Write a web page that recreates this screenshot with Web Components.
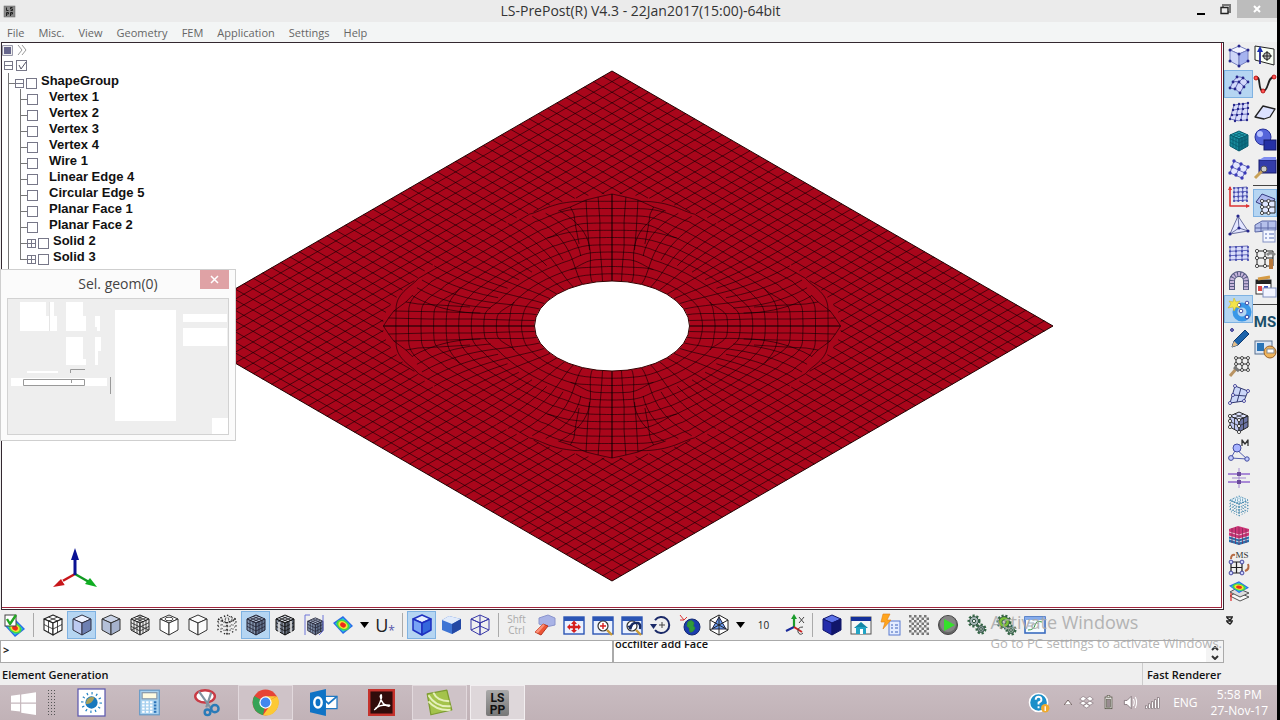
<!DOCTYPE html>
<html lang="en">
<head>
<meta charset="utf-8">
<title>LS-PrePost(R) V4.3</title>
<style>
html,body{margin:0;height:100%;background:#000}
body{font-family:"Open Sans","Noto Sans",sans-serif;font-size:12px;color:#111}
</style>
</head>
<body>
<ls-app></ls-app>
<script>
/* ---------- icon drawing helpers ---------- */
const NAVY='#26268c';
const poly=(pts,f='none',s='none',w=1)=>`<polygon points="${pts}" fill="${f}" stroke="${s}" stroke-width="${w}" stroke-linejoin="round"/>`;
const path=(d,s='#222',f='none',w=1)=>`<path d="${d}" stroke="${s}" fill="${f}" stroke-width="${w}" stroke-linejoin="round"/>`;
const rect=(x,y,w,h,f='none',s='none',sw=1)=>`<rect x="${x}" y="${y}" width="${w}" height="${h}" fill="${f}" stroke="${s}" stroke-width="${sw}"/>`;
const circ=(x,y,r,f='none',s='none',w=1)=>`<circle cx="${x}" cy="${y}" r="${r}" fill="${f}" stroke="${s}" stroke-width="${w}"/>`;
const dots=(list,r=1.3,f=NAVY,s='none')=>list.map(p=>circ(p[0],p[1],r,f,s,.8)).join('');
const mix=(a,b,t)=>[a[0]+(b[0]-a[0])*t,a[1]+(b[1]-a[1])*t];
function faceGrid(a,b,c,d,n,s,w=.8){
  let out='';
  for(let i=1;i<n;i++){
    const t=i/n,p=mix(a,b,t),q=mix(d,c,t),u=mix(a,d,t),v=mix(b,c,t);
    out+=`M${p}L${q}M${u}L${v}`;
  }
  return path(out,s,'none',w);
}
const T=[11,1],UR=[20,5],UL=[2,5],C=[11,9],DL=[2,16],DR=[20,16],B=[11,21];
function cube(t,l,r,s='#222',n=0,w=1){
  return poly([T,UR,C,UL],t,s,w)+poly([UL,C,B,DL],l,s,w)+poly([C,UR,DR,B],r,s,w)+
    (n?faceGrid(T,UR,C,UL,n,s)+faceGrid(UL,C,B,DL,n,s)+faceGrid(C,UR,DR,B,n,s):'');
}
const contour=(y=0)=>poly(`1,${9+y} 11,${2+y} 21,${12+y} 11,${20+y}`,'#2a6ae8')+poly(`3,${9.5+y} 11,${4+y} 19,${12+y} 11,${18+y}`,'#22cfe0')+
  `<g transform="rotate(30 11 ${11+y})"><ellipse cx="11" cy="${11+y}" rx="7" ry="5" fill="#45d545"/><ellipse cx="11" cy="${11+y}" rx="5" ry="3.6" fill="#f2e530"/><ellipse cx="11" cy="${11+y}" rx="3" ry="2.3" fill="#ee2a1a"/></g>`;
const win=rect(1,3,20,17,'#eaf1ff','#2b55b5',1.4)+rect(1,3,20,4,'#2b55b5');
const lens=circ(11,12,5,'#fff','#333',1.2)+path('M15 16L20 21','#c99a35','none',2.4);
const gear=(x,y,r,f)=>`<circle cx="${x}" cy="${y}" r="${r}" fill="none" stroke="#364" stroke-width="3" stroke-dasharray="2 1.6"/>`+circ(x,y,r-.6,f,'#354')+circ(x,y,r/3,'#eee','#354');
const mesh3=(x0,y0,x1,y1,c='#4449ac')=>{let d='',p=[];for(let i=0;i<4;i++){const x=x0+(x1-x0)*i/3,y=y0+(y1-y0)*i/3;d+=`M${x0} ${y}L${x1} ${y-1}M${x} ${y0}L${x} ${y1}`;for(let j=0;j<4;j++)p.push([x,y0+(y1-y0)*j/3]);}return rect(x0,y0,x1-x0,y1-y0,'#d9ddfa')+path(d,c,'none',.8)+dots(p,1.1,c);};
const brackets=path('M7 1H2V21M20 1V17L16 21','#6d74d8','none',1);

const ICONS={
check:contour(3)+rect(1,1,11,11,'#fff','#444')+path('M3 5L6 10L12 1','#22a522','none',2.4),
gridCube:cube('#fff','#fff','#fff','#222',2,1.1),
shade:cube('#eef2ff','#bccaf2','#6e80b2','#334'),
flat:cube('#c9d3e6','#b4c0d8','#a5b2cc','#333'),
gridWire:cube('#fff','#eee','#eee','#222',3)+path('M11 1V21M2 16L11 12L20 16','#444'),
feature:cube('#fff','#fff','#fff','#333')+`<ellipse cx="11" cy="5" rx="4" ry="1.8" fill="none" stroke="#444"/>`,
outline:cube('#fafafa','#fafafa','#fafafa','#333'),
points:`<g stroke-dasharray="1.4 2.6">${cube('none','none','none','#222',3,1.3)}</g>`,
gridShade:cube('#aebdd2','#8495ae','#64748f','#223',3),
gridShade2:cube('#dce0e8','#8c95a6','#626a78','#111',3)+path('M5 8V19M17 7V18','#fff','none',1.4),
gridSect:`<g transform="translate(3 3) scale(.85)">${cube('#b5c2d8','#8495b0','#64748f','#223',3)}</g>`+brackets,
contour:contour(),
blue:cube('#e4eeff','#79a4f6','#3467dc','#1e2fc0',0,1.5),
blueSolid:poly('2,6 9,2 21,5 21,15 12,20 2,16','#3e74d4')+poly('2,6 9,2 21,5 12,10','#e1ebfb')+poly('12,10 21,5 21,15 12,20','#2448a4'),
blueWire:cube('none','none','none','#3a3aa8',0)+path('M2 16L11 12L20 16M11 1V12','#3a3aa8'),
eraser:poly('5,4 14,1 21,4 21,11 12,13 5,10','#a9b3e6','#8a94cc')+poly('1,18 9,10 14,12 7,21','#ee5535','#b83520')+poly('1,18 9,10 11,11 4,19','#f9917a'),
fit:win+path('M11 8V18M6 13H16','#d51f1f','none',2.4)+poly('11,6.5 14,10 8,10','#d51f1f')+poly('11,19 14,16 8,16','#d51f1f')+poly('4,13 7,10 7,16','#d51f1f')+poly('18,13 15,10 15,16','#d51f1f'),
zoomIn:win+lens+path('M8 12H14M11 9V15','#d51f1f','none',1.4),
zoomOut:win+lens+path('M9 15Q10 8 17 9Q20 10 19 15','#182a60','none',2.4)+poly('6,12 12,11 10,16','#182a60'),
rotate:`<g transform="translate(0 1)">${path('M5 15A8 8 0 1 0 5 5','#1b2a68','none',2)}${poly('0,9 7,9 3.5,14','#1b2a68')}${path('M9 10H15M12 7V13','#444')}</g>`,
globe:circ(13,13,8,'#1b3cae','#142a70')+path('M9 8Q13 5 15 9Q13 12 16 14Q14 19 11 18Q11 13 8 12Z','#2f8b35','#2f9b3b')+path('M1 1L5 6M5 6H1M5 6L8 3','#d33'),
pyramid:poly('11,1 20,6 20,16 11,21 2,16 2,6','#fff','#222')+poly('11,3 18,15 4,15','#6a9cf0','#224')+path('M11 1V21M2 6L11 11L20 6M2 16L11 11L20 16','#222'),
axes:path('M11 13V4','#1c9b2c','none',2.2)+poly('11,0 14,5 8,5','#1c9b2c')+path('M11 13L3 17','#1a2a9a','none',2)+path('M11 13L19 18','#c22','none',2)+path('M16 3L21 9M21 3L16 9','#444')+path('M20 13Q14 13 15 18Q17 22 20 19','#444'),
navyCube:cube('#5d73e8','#242cab','#11166b','#11166b'),
home:rect(1,3,20,17,'#f7f7f7','#555')+rect(1,3,20,4,'#15309a')+poly('11,8 18,14 4,14','#1587a5')+rect(6,13,10,7,'#22a4c5')+rect(10,15,3,5,'#fff'),
bolt:rect(10,7,11,14,'#e3ecff','#5a7bd0')+path('M12 11H14M16 11H19M12 14H14M16 14H19M12 18H14M16 18H19','#3d60b8')+poly('4,0 11,0 8,6 12,6 4,15 6,8 2,8','#ffa51e','#e37e10',.6),
checker:Array.from({length:64},(_,i)=>((i+(i>>3))%2?'':rect(1+(i%8)*2.5,1+(i>>3)*2.5,2.5,2.5,'#777'))).join(''),
play:circ(11,11,9.5,'#666','#444')+circ(11,10,8,'#858585')+poly('7,5 18,11 7,17','#35e02b'),
gears:gear(8,7,5,'#a8b8b8')+gear(15,15,4,'#8fa0a0'),
gearsGreen:gear(9,8,6,'#79c037')+gear(16,16,4,'#93b59d'),
chart:rect(1,3,20,16,'#f5fbff','#3a6cc0',1.6)+rect(1,3,20,3,'#86acec')+path('M4 16Q10 16 11 11T18 8','#399a45')+path('M4 9H10M4 12H8','#9ab'),
/* side tool column */
solid:cube('#f2f4ff','#cdd5f8','#a5b3ef','#7780c0')+dots([T,UR,C,UL,DL,DR,B],1.5),
surf:path('M2 15Q5 7 9 4Q15 3 20 9Q15 13 12 20Q8 15 2 15Z','#6a70b8','#d2d8fb')+path('M5 9Q11 7 16 14M15 5Q9 9 7 16','#5a60b0')+dots([[2,15],[5,9],[9,4],[15,5],[20,9],[16,14],[12,20],[7,16],[11,9]],1.4),
meshSurf:path('M6 4L3 18L8 20L20 19L20 3Z','none','#d9ddfa')+path('M6 4L2 18M11 3L7 20M15 3L13 19M20 2L19 19M6 4L20 2M5 9L20 7M4 14L20 13M2 18Q10 21 19 19','#5358b0','none',.8)+dots([[6,4],[11,3],[15,3],[20,2],[5,9],[10,8],[15,8],[20,7],[4,14],[9,14],[14,13],[20,13],[2,18],[7,20],[13,19],[19,19]],1.2),
teal:cube('#27a9b8','#178a9b','#0d7285','#075c6e',3),
nodesQ:poly('6,3 20,9 14,20 2,15','#e3e6ff','#6a70b8')+path('M4 9L17 15M13 6L8 17','#6a70b8')+dots([[6,3],[20,9],[14,20],[2,15],[4,9],[17,15],[13,6],[8,17],[11,11]],1.7,'#3a3ab8'),
redAxis:mesh3(6,2,19,15)+path('M2 1V20H21','#d33','none',1.6)+poly('0,4 2,0 4,4','#d33')+poly('18,18 22,20 18,22','#d33'),
tetra:poly('10,2 20,17 2,20','#e3e6ff','#6a70a0')+path('M10 2L11 14L2 20M11 14L20 17','#6a70a0')+dots([[10,2],[20,17],[2,20],[11,14]],1.6),
quads:mesh3(2,5,20,18),
arch:path('M4 20V11A7 7 0 0 1 18 11V20','#555a80','none',6)+path('M4 20V11A7 7 0 0 1 18 11V20','#c6b5dc','none',4)+`<path d="M4 20V11A7 7 0 0 1 18 11V20" fill="none" stroke="#555a80" stroke-width="5" stroke-dasharray="1 2"/>`,
star:circ(14,14,7,'none','#3997e8',5)+dots([[11,7],[19,5],[13,13],[19,19]],1.8,'#fff',NAVY)+poly('6,0 8,4 12,3 9,7 12,10 8,9 6,13 5,9 0,10 3,6 1,3 5,4','#f4e449','#cdb92b',.6),
pencil:poly('4,20 6,14 17,3 21,7 10,18','#1b62aa','#0f3b71')+poly('4,20 6,14 10,18','#e3bc87')+circ(4,3,1.4,'#88b',NAVY),
wrenchMesh:path('M8 3H20V15H8ZM14 3V15M8 9H20','#222')+dots([[8,3],[14,3],[20,3],[8,9],[14,9],[20,9],[14,15],[20,15]],1.5,'#fff','#222')+path('M2 21L8 14','#b99362','none',3)+path('M6 12L11 16','#777','none',3),
sheet:poly('7,3 20,8 16,18 2,20','#cbd6f8','#333a70')+path('M5 12L18 13M13 5L9 19','#333a70')+dots([[7,3],[20,8],[16,18],[2,20],[5,12]],1.5,'#fff',NAVY),
boxMesh:cube('#dde2ff','#bfc7f2','#6c74a5','#222',2)+dots([UL,C,DL,B,[2,10],[11,15]],1.6,'#fff','#222'),
massM:path('M8 10L3 19L19 20Z','#5560b0')+circ(9,9,4,'#a7b3ff','#414a9f')+circ(3,19,2.4,'#c4ccff','#414a9f')+circ(19,20,2.2,'#c4ccff','#414a9f')+path('M14 7V1L17 5L20 1V7','#333','none',1.3),
beams:path('M0 7H22M0 15H22','#9268ce','none',1.6)+path('M4 11H18M11 1V21','#a389d0')+rect(9,5,4,4,'#6c4c9c')+rect(9,13,4,4,'#6c4c9c'),
cloud:`<g stroke-dasharray="1 2">${cube('#edf5fa','none','none','#3f85ac',4,1)}${path('M3 6Q8 9 20 7M2 10Q12 15 20 10M2 14Q12 18 20 15','#3f85ac')}</g>`,
stack:poly('1,5 10,2 21,5 21,12 11,15 1,12','#cc3577')+poly('1,12 11,15 21,12 21,18 11,21 1,18','#2672af')+path('M1 8L11 11L21 8M1 12L11 15L21 12M1 15L11 18L21 15','#fff','none',.7)+path('M4 4V19M7.5 3V20M11 3V21M14.5 4V20M18 5V19','#822553','none',.7),
msConv:path('M3 10H14V21H3ZM8.5 10V21M3 15.5H14','#222','none',1.2)+dots([[3,10],[14,10],[3,21],[14,21]],1.9,'#cfd6ff',NAVY)+path('M3 7Q3 2 7 3M20 12Q22 17 17 19','#b66b44','none',2),
layers:poly('2,16 9,12 21,17 12,21','#f8f8f8','#555')+poly('2,12 9,8 21,13 12,17','#ddd','#555')+`<g transform="scale(1 .65)">${contour()}</g>`+path('M3 13V21','#d22','none',1.2),
/* second side column */
plane:poly('1,1 20,4 20,20 1,15','#f9fff4','#222')+path('M6 19V4',NAVY,'none',1.8)+poly('6,1 9,7 3,7','#1b2db0')+circ(13,11,3.5,'#bbb','#222')+path('M13 6V16M8 11H18','#222'),
curve:path('M1 5C8 1 3 18 9 18C15 18 13 4 20 4','#222','none',1.8)+dots([[2,5],[9,18],[20,4]],2,'#f55','#a00'),
surface:poly('1,16 9,5 21,8 16,16 10,18','#dce2ff','#222',1.3),
sphereBox:circ(9,8,8,'#5565da','#252f9a')+circ(6,5,3,'#b7c2ff')+rect(10,11,12,10,'#2430a4','#141a6a'),
boxTool:rect(5,3,17,13,'#333caa','#171b6c')+poly('5,3 10,0 22,0 22,3','#7f8df0')+path('M1 21L9 13','#c9a258','none',3)+circ(10,12,3,'#ccc','#555'),
surfMesh:poly('2,10 8,2 21,7 15,16','#aeb9ef','#333a80')+path('M8 9H21V21H8ZM14.5 9V21M8 15H21','#222','#dfe7ff')+dots([[8,9],[14.5,9],[8,15],[14.5,15],[8,21],[14.5,21]],1.6,'#fff','#222'),
blockList:poly('1,5 8,1 22,1 22,10 1,12','#b5c0eb','#5b67a4')+path('M1 8H22M7 3V12M14 2V11','#5b67a4')+rect(9,10,12,12,'#f3f6ff','#8391c3')+path('M11 14H13M15 14H20M11 18H13M15 18H20','#556ab5'),
meshTool:path('M3 3H19V18H3ZM11 3V18M3 10H19','#222')+dots([[3,3],[11,3],[3,10],[11,10],[3,18],[11,18]],1.6,'#fff','#222')+path('M17 11V21','#b7783c','none',4)+path('M13 7Q17 3 21 7','#888','none',3),
keyCard:rect(2,4,15,14,'#fff','#333')+rect(2,4,15,4,'#222')+path('M4 3L16 1','#d59a43','none',3)+rect(4,10,4,5,'#dd4545')+rect(10,10,4,5,'#3c54bb')+rect(9,12,13,9,'#f2f4ff','#8090c0'),
monitor:rect(1,2,17,13,'#dbe6f5','#59708f')+rect(3,4,7,8,'#2974b7')+circ(16,13,6,'#f0b45a','#99642c')+rect(13,10,7,4,'#fff','#888'),
/* task bar */
start:poly('0,5 8,4 8,11 0,11','#fff')+poly('9,4 22,2 22,11 9,11','#fff')+poly('0,12 8,12 8,19 0,18','#fff')+poly('9,12 22,12 22,22 9,20','#fff'),
sun:rect(0,0,22,22,'#fff','#5b58ae')+circ(11,11,5,'#1878bd')+path('M6.5 12Q11 13 13.5 7A5 5 0 0 0 6.5 12','none','#a8a05a')+`<circle cx="11" cy="11" r="7.5" fill="none" stroke="#2382c4" stroke-width="2" stroke-dasharray="1 2.9"/>`,
calc:rect(3,1,16,20,'#a8d1ef','#689bc7')+rect(5,3,12,5,'#fffbe0','#89a')+Array.from({length:16},(_,i)=>rect(5+(i%4)*3.2,10+(i>>2)*2.6,2,1.6,i%4==3?'#2b73b9':'#fff')).join(''),
snip:`<ellipse cx="9" cy="6" rx="8" ry="5" fill="#fff" stroke="#c93b45" stroke-width="2"/>`+path('M4 2L14 16M14 3L10 15','#8193a0','none',1.8)+circ(17,16,3,'none','#2a7bb8',2)+circ(11,19,2.3,'none','#2a7bb8',2),
chrome:circ(11,11,10.5,'#e64436')+path('M11 11L1.9 5.8A10.5 10.5 0 0 0 9 21.3Z','none','#36a356')+path('M11 11L20 6H11L15 13L9 21.3A10.5 10.5 0 0 0 20.5 6Z','none','#fcc934')+circ(11,11,5,'#fff')+circ(11,11,4,'#4387ef'),
outlook:rect(9,6,13,10,'#fff','#1c77c3')+path('M10 7L15 12L22 6','#1c77c3','none',1.4)+poly('0,3 13,0 13,22 0,19','#0f73c5')+`<ellipse cx="6.5" cy="11" rx="3" ry="4" fill="none" stroke="#fff" stroke-width="2"/>`,
acrobat:rect(1,1,20,20,'#300c0b','#c5322c',2)+path('M5 17Q9 15 11 7Q11 3 10 6Q11 13 17 14Q19 13 15 13Q9 13 6 16','#fff','none',1.2),
camtasia:poly('1,4 17,1 21,17 4,21','#a4c34b','#7d9c30')+path('M2 5Q8 15 20 14M2 10Q9 18 20 17M6 3Q9 10 19 10','#e5f0bb','none',1.6),
help:circ(10,11,9.5,'#1b8fc9','#fff',1.6)+path('M7 8Q7 5 10 5Q13 5 13 8Q13 10 10 11V13M10 15V17','#fff','none',2)+circ(17,17,4.4,'#efaa2d')+path('M17 15V20','#fff','none',1.4),
dropbox:['6,2 11,5 6,9 1,6','16,2 21,6 16,9 11,5','6,9 11,12 6,15 1,12','16,9 21,12 16,15 11,12','11,13 16,16 11,19 6,16'].map(p=>poly(p,'#fff','#7a6a70',.9)).join(''),
battery:rect(6,3,10,17,'#fff','#554',1.2)+rect(8,6,6,12,'#998c91','#665')+rect(9,1,4,2,'#fff','#554',.8),
volume:poly('2,8 6,8 12,2 12,20 6,14 2,14','#fff','#6a5c62')+path('M15 6Q18 11 15 16M18 3Q22 11 18 19','#fff','none',1.5),
signal:[0,1,2,3,4].map(i=>rect(1+i*4.3,16-i*3,2.8,4+i*3,'#fff','#6a5c62',.8)).join(''),
app:rect(0,0,22,22,'#8a8a8a','#666')+path('M5 3V9H9M17 3H13V6H17V9H13M5 20V13H9V16H5M13 20V13H17V16H13','#222','none',2)
};

const define=(name,css,html,setup)=>{
  const t=document.createElement('template');
  t.innerHTML=`<style>${css}</style>${html}`;
  customElements.define(name,class extends HTMLElement{
    connectedCallback(){
      if(this.shadowRoot)return;
      this.attachShadow({mode:'open'}).append(t.content.cloneNode(true));
      if(setup)setup(this.shadowRoot,this);
    }
  });
};

define('ls-icon',':host{display:inline-flex;width:22px;height:22px;flex:none}svg{display:block;width:100%;height:100%;overflow:visible}',
'<svg viewBox="0 0 22 22" aria-hidden="true"></svg>',(r,h)=>{r.querySelector('svg').innerHTML=ICONS[h.getAttribute('name')]||'';});

define('ls-tool',`:host{display:flex;width:29px;height:28px;flex:none}
button{all:unset;box-sizing:border-box;width:100%;height:100%;display:flex;align-items:center;justify-content:center;border:1px solid transparent;font-size:12px;color:#222}
:host([active]) button{background:#b5d5f2;border-color:#7fb2e2}
:host([narrow]){width:15px}`,
'<button type="button"><slot></slot></button>',(r,h)=>{
  const n=h.getAttribute('icon');
  r.querySelector('button').setAttribute('aria-label',h.getAttribute('label')||n||'tool');
  if(n)r.querySelector('button').innerHTML=`<ls-icon name="${n}"></ls-icon>`;
});

define('ls-titlebar',`:host{display:grid;grid-template-columns:1fr auto 1fr;align-items:center;height:22px;background:#ebebeb;padding-left:4px}
h1{margin:0;text-align:center;font-size:14px;line-height:22px;font-weight:400;color:#333}
ls-icon{width:11px;height:13px}
nav{display:flex;align-items:flex-start;height:22px;justify-self:end}
button{all:unset;width:24px;height:18px;display:flex;align-items:center;justify-content:center}
button:last-child{width:40px;background:#bcbcbc}`,
`<ls-icon name="app"></ls-icon><h1><slot></slot></h1><nav>
<button aria-label="Minimize"><svg width="8" height="12"><path d="M0 10h8v2H0z"/></svg></button>
<button aria-label="Restore"><svg width="11" height="11" fill="none" stroke="#222"><path d="M3 3V1h7v7H8" stroke="#777" stroke-width="2"/><path d="M1 3.5h7v6H1z" fill="#ebebeb" stroke-width="1.4"/></svg></button>
<button aria-label="Close"><svg width="8" height="8" stroke="#fff" stroke-width="2"><path d="M1 1l6 6M7 1L1 7"/></svg></button></nav>`);

define('ls-menubar',`:host{display:flex;height:20px;background:#f3f5f5;padding-left:7px;gap:14px;box-sizing:border-box}
button{all:unset;font-size:11px;line-height:17px;color:#666}`,
['File','Misc.','View','Geometry','FEM','Application','Settings','Help'].map(x=>`<button type="button">${x}</button>`).join(''));

/* finite element plate with a circular hole: a square grid outside,
   rings and spokes inside, joined by four petal shaped zones */
define('ls-mesh',':host{display:block;min-width:0;min-height:0}svg{width:100%;height:100%;display:block}',
`<svg viewBox="0 0 1219 564" role="img" aria-label="Meshed plate with hole"><g transform="translate(-2 -43)">
<path d="M612 71L1053 326L612 581L171 326Z" fill="#a9061b" stroke="#200" stroke-width="1"/>
<path id="m" fill="none" stroke="#000" stroke-opacity=".7" stroke-width=".8"/>
<ellipse cx="612" cy="326" rx="77.5" ry="45" fill="#fff" stroke="#300"/></g></svg>`,r=>{
  const S=Math.SQRT2,K=Math.sqrt(3),D=Math.PI/180,N=48,E=255/S,step=2*E/N;
  const out=[];
  const add=pts=>{if(pts.length>1)out.push('M'+pts.map(p=>(612+p[0]*K).toFixed(1)+' '+(326-p[1]).toFixed(1)).join('L'));};
  const edge=a=>119+13*Math.pow(Math.abs(Math.cos(2*a)),4);
  for(let i=1;i<N;i++){
    const c=-E+i*step;
    for(const flip of [0,1]){
      let run=[];
      const flush=()=>{if(run.length>1)add([run[0],run[run.length-1]]);run=[];};
      for(let k=0;k<=400;k++){
        const s=-E+2*E*k/400,p=flip?c:s,q=flip?s:c,x=(p+q)/S,y=(p-q)/S;
        if(Math.hypot(x,y)>=edge(Math.atan2(y,x)))run.push([x,y]);else flush();
      }
      flush();
    }
  }
  const smooth=(a,b,x)=>{const t=Math.min(1,Math.max(0,(x-a)/(b-a)));return t*t*(3-2*t);};
  const mirrored=pts=>[[1,1],[-1,1],[1,-1],[-1,-1]].forEach(m=>add(pts.map(p=>[p[0]*m[0],p[1]*m[1]])));
  const both=pts=>{mirrored(pts);mirrored(pts.map(p=>[p[1],p[0]]));};
  const polar=(rr,a)=>[rr*Math.cos(a*D),rr*Math.sin(a*D)];
  const JOIN=67;
  const diag=(i,a)=>{const c=(i+6)*step,t=Math.min(1,(c-45)/59);return c*((1-t)+t/Math.cos((a-45)*D));};
  for(let i=1;i<=9;i++){
    const pts=[];
    for(let a=90-JOIN;a<=JOIN;a+=2){const rr=diag(i,a);if(rr<=edge(a*D)+1)pts.push(polar(rr,a));}
    mirrored(pts);
  }
  for(let k=1;k<=11;k++){
    const h=45+7.25*k,t=k/12,target=diag(Math.max(1,Math.round(k*.8)),JOIN),pts=[];
    for(let a=JOIN;a<=90;a+=1){
      const ra=h*((1-t)+t/Math.sin(a*D)),s=smooth(JOIN,82,a),rr=ra*s+target*(1-s);
      if(rr<=edge(a*D))pts.push(polar(rr,a));
    }
    both(pts);
  }
  for(let j=-8;j<=8;j++){
    const q=j*step,p=Math.sqrt(119*119-q*q),P0=[(p+q)/S,(p-q)/S];
    const P3=polar(45,45-j*3.8),P1=[P0[0]-26,P0[1]-26],P2=[P3[0]*1.4,P3[1]*1.4],pts=[];
    const end=j%2?.56:1;
    for(let n=0;n<=18;n++){const u=end*n/18,v=1-u;pts.push([0,1].map(k=>v*v*v*P0[k]+3*v*v*u*P1[k]+3*v*u*u*P2[k]+u*u*u*P3[k]));}
    mirrored(pts);
  }
  both([[0,45],[0,132]]);
  both([polar(45,83),[6,60],[7,80],[7,105],[8,129]]);
  both([[13,76],[14,95],[15,126]]);
  both([[19,82],[21,100],[22,112],[24,119]]);
  both([[0,132],[8,129],[15,126],[24,119],[31,115]]);
  r.querySelector('#m').setAttribute('d',out.join(''));
});

define('ls-tree-item',`:host{display:flex;height:16px;font:bold 13px/16px "Liberation Sans",Arial,sans-serif;color:#111}
i{width:7px;height:1px;background:#777;margin-top:10px;flex:none}
b{box-sizing:border-box;width:9px;height:9px;border:1px solid #778;margin-top:6px;flex:none;background:linear-gradient(#778,#778) center/7px 1px no-repeat #fff}
b.plus{background:linear-gradient(#778,#778) center/7px 1px no-repeat,linear-gradient(#778,#778) center/1px 7px no-repeat #fff}
label{display:flex}
input{appearance:none;box-sizing:border-box;width:11px;height:11px;margin:5px 0 0 0;border:1px solid #778;background:#fff;flex:none}
b+label input{margin-left:2px}
span{padding-left:11px;white-space:nowrap}
b+label span{padding-left:4px}`,
'<i></i><label><input type="checkbox"><span><slot></slot></span></label>',(r,h)=>{
  const k=h.getAttribute('kind');
  if(k){const b=document.createElement('b');if(k==='plus')b.className='plus';r.querySelector('i').after(b);}
});

define('ls-tree',`:host{display:block;justify-self:start;align-self:start}
header{display:flex;height:14px;align-items:center;gap:4px}
.root{display:flex;height:15px;align-items:center;gap:3px;padding:1px 0 0 2px}
.root b{box-sizing:border-box;width:9px;height:9px;border:1px solid #778;background:linear-gradient(#778,#778) center/7px 1px no-repeat}
.root input{appearance:none;width:11px;height:11px;box-sizing:border-box;border:1px solid #778;margin:0}
.l1{padding:0 0 24px 6px;background:linear-gradient(#777,#777) 6px 0/1px 100% no-repeat}
.l2{margin-left:12px;background:linear-gradient(#777,#777) 0 0/1px 171px no-repeat}
.check{display:grid}.check>*{grid-area:1/1}`,
`<header><svg width="11" height="11"><path d="M.5.5h10v10H.5z" fill="#eee" stroke="#99a"/><path d="M2 2h7v7H2z" fill="#66668c"/></svg><svg width="10" height="10" fill="none" stroke="#999"><path d="M1 0l4 5-4 5M5 0l4 5-4 5"/></svg></header>
<div class="root"><b></b><label class="check"><input type="checkbox" checked aria-label="All"><svg width="11" height="11" fill="none" stroke="#556"><path d="M3 5l2 4 5-7"/></svg></label></div>
<div class="l1"><ls-tree-item kind="minus">ShapeGroup</ls-tree-item><div class="l2">
${['Vertex 1','Vertex 2','Vertex 3','Vertex 4','Wire 1','Linear Edge 4','Circular Edge 5','Planar Face 1','Planar Face 2'].map(x=>`<ls-tree-item>${x}</ls-tree-item>`).join('')}
<ls-tree-item kind="plus">Solid 2</ls-tree-item><ls-tree-item kind="plus">Solid 3</ls-tree-item></div></div>`);

define('ls-viewport',`:host{display:grid;min-height:0;margin:0 0 0 1px;border:1px solid #332830;padding:0 1px 1px 0;background:#fff}
.in{display:grid;grid-template:minmax(0,1fr)/minmax(0,1fr);min-height:0;border:solid #a0243c;border-width:0 1px 1px 0}
.in>*{grid-area:1/1}
.triad{align-self:end;justify-self:start;margin:0 0 17px 47px}`,
`<div class="in"><ls-mesh></ls-mesh><ls-tree></ls-tree>
<svg class="triad" width="52" height="46" aria-label="Axis triad"><path d="M26 30L10 39" stroke="#c8161a" stroke-width="2.5"/><path d="M4 43l8-8 4 6z" fill="#c8161a"/><path d="M13 36l4 6" stroke="#fff"/><path d="M26 30L40 38" stroke="#119a22" stroke-width="2.5"/><path d="M48 43l-12-3 5-6z" fill="#0fae22"/><path d="M26 31V14" stroke="#0a1294" stroke-width="3"/><path d="M26 4l4 12h-8z" fill="#0a1294"/></svg></div>`);

define('ls-dialog',`:host{display:block;box-sizing:border-box;background:#fbfbfb;border:1px solid #cfcfcf;padding:0 6px 5px}
header{display:grid;grid-template-columns:1fr;height:28px}
h2{grid-area:1/1;margin:0;text-align:center;font-weight:400;font-size:14px;line-height:28px;color:#444}
button{all:unset;grid-area:1/1;justify-self:end;width:29px;height:19px;background:#dfa2a5;display:flex;align-items:center;justify-content:center}
svg{display:block}
.body{width:100%;box-sizing:border-box;height:auto}`,
`<header><h2><slot></slot></h2><button type="button" aria-label="Close"><svg width="9" height="9" stroke="#fff" stroke-width="1.5"><path d="M1 1l7 7M8 1L1 8"/></svg></button></header>
<svg class="body" viewBox="0 0 222 137"><rect x=".5" y=".5" width="221" height="136" fill="#eee" stroke="#d2d2d2"/>
<g fill="#fff"><path d="M13 4h26v14h3V4h5v14h3v15H13zM59 4h17v14h3v15H59zM88 18h5v15h-3v-4h-2zM59 39h17v22h3v6H59zM88 39h6v14h-3v14h-3zM108 12h61v111h-61zM176 16h44v8h-44zM176 30h44v18h-44zM205 120h16v16h-16zM20 73h31v2H20zM4 80h96v8H4z"/></g>
<path d="M42.5 4v29" stroke="#e5e5e5"/><path d="M16.500 81.500h61v6h-61z" fill="#fff" stroke="#999"/><path d="M63.500 75v-3.500H78M64.500 82v3M103.500 79v17" fill="none" stroke="#999"/></svg>`);

define('ls-toolbar',`:host{display:flex;height:30px;align-items:center;background:#efefef;overflow:hidden}
hr{width:1px;height:24px;border:0;background:#aaa;margin:0 4px;flex:none}
.u{width:26px;font:18px/20px "Open Sans",sans-serif;display:flex;color:#222;align-items:center;justify-content:center;flex:none}
.u small{font-size:12px;color:#55a;align-self:flex-end;line-height:8px}
.mod{width:27px;font-size:10px;line-height:11px;color:#aaa;text-align:center;flex:none}
.n{width:31px;text-align:center;font-size:10px;color:#222;flex:none}`,'',r=>{
  const drop='<svg width="9" height="6"><path d="M0 0h9L4.5 6z"/></svg>';
  const t=(n,a)=>`<ls-tool icon="${n}" ${a?'active':''}></ls-tool>`,d=`<ls-tool narrow label="More">${drop}</ls-tool>`;
  const all=list=>list.map(x=>t(x)).join('');
  const tpl=document.createElement('template');
  tpl.innerHTML=t('check')+'<hr>'+t('gridCube')+t('shade',1)+all(['flat','gridWire','feature','outline','points'])+t('gridShade',1)+all(['gridShade2','gridSect','contour'])+d+
  '<div class="u">U<small>*</small></div><hr>'+t('blue',1)+all(['blueSolid','blueWire'])+'<hr><div class="mod">Shft<br>Ctrl</div>'+all(['eraser','fit','zoomIn','zoomOut','rotate','globe','pyramid'])+d+'<div class="n">10</div>'+t('axes')+'<hr>'+
  all(['navyCube','home','bolt','checker','play','gears','gearsGreen','chart']);
  r.append(tpl.content);
});

define('ls-command',`:host{display:grid;grid-template-columns:1fr 1fr;height:23px;background:#fff;border:1px solid #aaa;box-sizing:border-box;overflow:hidden}
label{display:flex;align-items:flex-start;padding-left:2px;font:bold 11px/18px "Open Sans",sans-serif;color:#222}
input{all:unset;flex:1;min-width:0}
.log{display:flex;justify-content:space-between;border-left:2px solid #aaa;padding-left:1px;overflow:hidden}
p{margin:0;font-size:11px;line-height:6px;font-weight:600;color:#111}
.spin{display:flex;flex-direction:column;width:17px;padding-top:3px;align-items:center;justify-content:space-around;background:#f4f4f4}`,
`<label>&gt;<input type="text" aria-label="Command"></label><div class="log"><p>occfilter add Face</p><div class="spin">
<svg width="8" height="5" fill="none" stroke="#333" stroke-width="2"><path d="M1 4l3-3 3 3"/></svg><svg width="8" height="5" fill="none" stroke="#333" stroke-width="2"><path d="M1 1l3 3 3-3"/></svg></div></div>`);

define('ls-dock',`:host{display:grid;grid-template-columns:29px 24px;grid-template-rows:minmax(0,1fr) 58px;background:#efefef;overflow:hidden;min-height:0}
.a{display:grid;grid-auto-rows:1fr;min-height:0}
.a ls-tool{height:auto}
.b{display:flex;flex-direction:column}
.b ls-tool{width:24px}
hr{height:1px;border:0;background:#444;margin:3px 0;width:100%;flex:none}
footer{padding:7px 0 0 2px}
.ms{font:bold 15px/22px "Roboto",sans-serif;color:#1b4f6a}
.conv{display:flex;position:relative}
.conv small{position:absolute;left:8px;top:-2px;font:9px/10px "Liberation Serif",serif;color:#333}`,
'<div class="a"></div><div class="b"></div><footer><svg width="8" height="9" fill="none" stroke="#222" stroke-width="1.5"><path d="M0 1h7M1 2l3 2 2-2M0 5h7M1 6l3 2 2-2"/></svg></footer>',r=>{
  const t=(n,a)=>n==='msConv'?'<ls-tool label="Convert"><span class="conv"><ls-icon name="msConv"></ls-icon><small>MS</small></span></ls-tool>':`<ls-tool icon="${n}" ${a?'active':''}></ls-tool>`;
  r.querySelector('.a').innerHTML=['solid','surf','meshSurf','teal','nodesQ','redAxis','tetra','quads','arch','star','pencil','wrenchMesh','sheet','boxMesh','massM','beams','cloud','stack','msConv','layers'].map(x=>t(x,x==='surf'||x==='star')).join('');
  r.querySelector('.b').innerHTML=['plane','curve','surface','sphereBox','boxTool'].map(x=>t(x)).join('')+'<hr>'+t('surfMesh',1)+['blockList','meshTool','keyCard'].map(x=>t(x)).join('')+'<hr><ls-tool label="MS"><span class="ms">MS</span></ls-tool>'+t('monitor');
});

define('ls-statusbar',`:host{display:flex;justify-content:space-between;height:22px;background:#efefef;font:600 11px/23px "Open Sans",sans-serif;color:#111;padding:0 0 0 2px}
span:last-child{width:135px;border-left:1px solid #ccc;padding-left:4px;box-sizing:border-box}`,'<span>Element Generation</span><span>Fast Renderer</span>');

define('ls-taskbar',`:host{display:flex;justify-content:space-between;height:35px;background:linear-gradient(#c9bcc1,#c1b2b7)}
nav,aside{display:flex;align-items:center}
button{all:unset;box-sizing:border-box;width:55px;height:35px;margin-right:3px;display:flex;align-items:center;justify-content:center;border:1px solid transparent}
nav ls-icon{width:27px;height:27px}
nav .start{width:46px;margin:0}
.start ls-icon{width:25px;height:25px}
.dots{width:8px;height:28px;margin:0 9px 0 1px;background:radial-gradient(circle,#555 1px,transparent 1px) 0 0/3px 3px}
.open{background:#cfc3c8;border-color:#e2d9dd}
.front{background:#ded7da;border-color:#f2eef0}
.ls{width:23px;height:26px;border-radius:2px;background:linear-gradient(#aaa,#777);font:bold 12px/12px Roboto,sans-serif;color:#111;text-align:center;padding-top:2px;box-sizing:border-box}
aside{color:#fff;font-size:12px;gap:7px;padding-right:9px}
aside ls-icon{width:15px;height:15px}
aside .help{width:21px;height:21px;margin-right:7px}
.lang{padding:0 6px}
time{text-align:center;font-size:12px;line-height:16px}`,
`<nav><button class="start" aria-label="Start"><ls-icon name="start"></ls-icon></button><span class="dots"></span>
${[['sun',''],['calc',''],['snip',''],['chrome','open'],['outlook',''],['acrobat',''],['camtasia','open']].map(x=>`<button class="${x[1]}" aria-label="${x[0]}"><ls-icon name="${x[0]}"></ls-icon></button>`).join('')}
<button class="front" aria-label="LS-PrePost"><span class="ls">LS<br>PP</span></button></nav>
<aside><ls-icon class="help" name="help"></ls-icon><svg width="8" height="5"><path d="M0 5L4 0l4 5z" fill="#fff" stroke="#766"/></svg><ls-icon name="dropbox"></ls-icon><ls-icon name="battery"></ls-icon><ls-icon name="volume"></ls-icon><ls-icon name="signal"></ls-icon><span class="lang">ENG</span><time>5:58 PM<br>27-Nov-17</time></aside>`);

define('ls-watermark',`:host{display:block;color:#a9a9a9;opacity:.85;pointer-events:none;white-space:nowrap}
p{margin:0;font-size:18px;line-height:24px}
p+p{font-size:13px;line-height:18px}`,'<p>Activate Windows</p><p>Go to PC settings to activate Windows.</p>');

define('ls-app',`:host{display:flex;flex-direction:column;box-sizing:border-box;min-height:100vh;padding-right:3px;position:relative}
main{flex:1;display:grid;grid-template-columns:minmax(0,1fr) 53px;min-height:0;background:#efefef}
.left{display:flex;flex-direction:column;min-height:0}
ls-viewport{flex:1}
ls-dock{height:0;min-height:100%}
ls-dialog{position:absolute;left:0;top:269px;width:236px}
ls-watermark{position:absolute;right:58px;bottom:68px}`,
`<ls-titlebar>LS-PrePost(R) V4.3 - 22Jan2017(15:00)-64bit</ls-titlebar><ls-menubar></ls-menubar>
<main><div class="left"><ls-viewport></ls-viewport><ls-toolbar></ls-toolbar><ls-command></ls-command></div><ls-dock></ls-dock></main>
<ls-statusbar></ls-statusbar><ls-taskbar></ls-taskbar>
<ls-dialog>Sel. geom(0)</ls-dialog><ls-watermark></ls-watermark>`);
</script>
</body>
</html>
